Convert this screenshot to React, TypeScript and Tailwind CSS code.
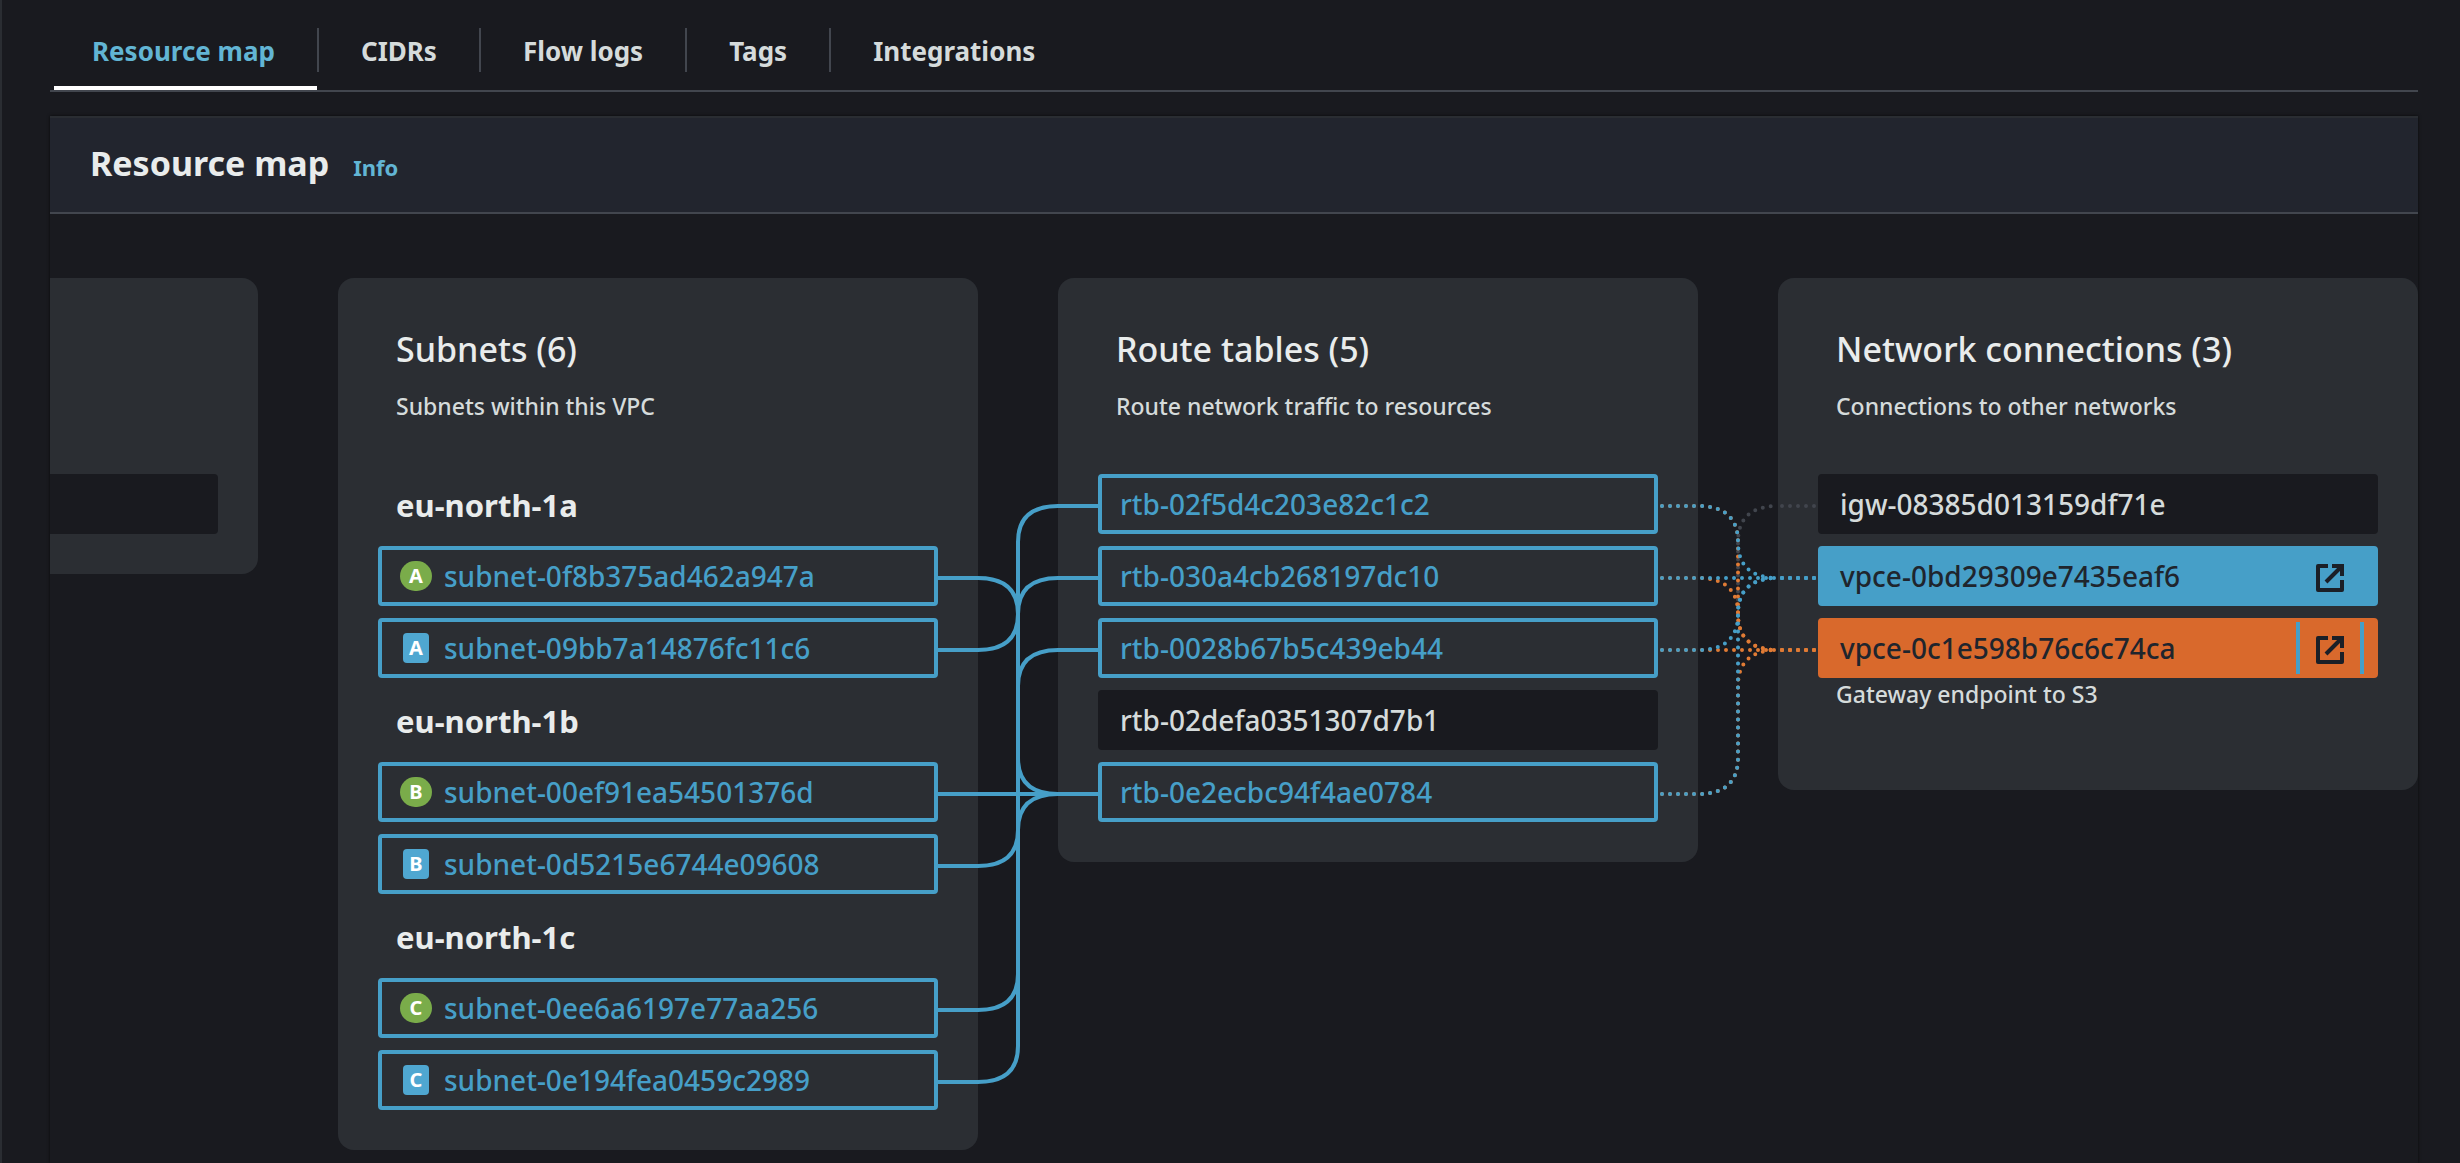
import React from "react";

const BLUE = "#469fc8";
const ORANGE = "#e07b35";
const GREY = "#41454d";

const TABS = ["Resource map", "CIDRs", "Flow logs", "Tags", "Integrations"];

type Subnet = { id: string; letter: string; isPublic: boolean };

const ZONES: { name: string; subnets: Subnet[] }[] = [
  {
    name: "eu-north-1a",
    subnets: [
      { id: "subnet-0f8b375ad462a947a", letter: "A", isPublic: true },
      { id: "subnet-09bb7a14876fc11c6", letter: "A", isPublic: false },
    ],
  },
  {
    name: "eu-north-1b",
    subnets: [
      { id: "subnet-00ef91ea54501376d", letter: "B", isPublic: true },
      { id: "subnet-0d5215e6744e09608", letter: "B", isPublic: false },
    ],
  },
  {
    name: "eu-north-1c",
    subnets: [
      { id: "subnet-0ee6a6197e77aa256", letter: "C", isPublic: true },
      { id: "subnet-0e194fea0459c2989", letter: "C", isPublic: false },
    ],
  },
];

const ROUTE_TABLES = [
  { id: "rtb-02f5d4c203e82c1c2", active: true },
  { id: "rtb-030a4cb268197dc10", active: true },
  { id: "rtb-0028b67b5c439eb44", active: true },
  { id: "rtb-02defa0351307d7b1", active: false },
  { id: "rtb-0e2ecbc94f4ae0784", active: true },
];

/* Row slots are 72px apart; slot 0 is the first row below a card's heading. */
const slotY = (slot: number) => 228 + slot * 72;

/* The middle part of a connector: a curve into the gutter's centre line and out again. */
function curve(from: number, to: number) {
  const a = slotY(from);
  const b = slotY(to);
  if (a === b) return `M40 ${a}H120`;
  const s = b > a ? 36 : -36;
  return `M40 ${a}Q80 ${a} 80 ${a + s}V${b - s}Q80 ${b} 120 ${b}`;
}

function SolidLinks({ links }: { links: [number, number][] }) {
  return (
    <svg className="relative z-10 -mx-10 h-[872px] w-40 shrink-0" viewBox="0 0 160 872" fill="none" stroke={BLUE} strokeWidth="4" aria-hidden="true">
      {links.map(([a, b]) => (
        <path key={`${a}-${b}`} d={`M0 ${slotY(a)}H40${curve(a, b)}M120 ${slotY(b)}H160`} />
      ))}
    </svg>
  );
}

function DottedLinks({ links }: { links: [number, number, string][] }) {
  return (
    <svg
      className="relative z-10 -mx-10 h-[872px] w-40 shrink-0"
      viewBox="0 0 160 872"
      fill="none"
      strokeWidth="4"
      strokeLinecap="round"
      strokeDasharray="0 8"
      strokeDashoffset="-4"
      aria-hidden="true"
    >
      {links.map(([a, b, color]) => (
        <g key={`${a}-${b}`} stroke={color}>
          <path d={`M0 ${slotY(a)}H40`} />
          <path d={curve(a, b)} />
          <path d={`M120 ${slotY(b)}H160`} />
        </g>
      ))}
    </svg>
  );
}

function Card({ title, description, children }: { title: string; description: string; children: React.ReactNode }) {
  return (
    <section className="min-w-0 flex-[640_1_640px] rounded-2xl bg-[#2b2e33] px-10 pt-12 pb-10">
      <h3 className="px-[18px] text-[34px] leading-[46px] font-medium text-[#e9ecec]">{title}</h3>
      <p className="mt-[18px] px-[18px] text-[23px] leading-8 font-medium text-[#d5dbdb]">{description}</p>
      <div className="mt-[52px] flex flex-col gap-3">{children}</div>
    </section>
  );
}

function Badge({ letter, isPublic }: { letter: string; isPublic: boolean }) {
  return (
    <span className="flex w-8 justify-center">
      <span
        className={
          isPublic
            ? "flex h-[30px] w-8 items-center justify-center rounded-full bg-[#7aac4a] text-xl leading-none font-bold text-white"
            : "flex h-[30px] w-[26px] items-center justify-center rounded bg-[#4fa7d1] text-xl leading-none font-bold text-white"
        }
      >
        {letter}
      </span>
    </span>
  );
}

function ExternalIcon() {
  return (
    <svg className="size-7" viewBox="0 0 28 28" fill="none" stroke="#1b1f27" strokeWidth="4" aria-hidden="true">
      <path d="M12 2H2V26H26V16" strokeLinejoin="round" />
      <path d="M16 2H26V12M26 2L10 18" />
    </svg>
  );
}

export default function App() {
  return (
    <main className="flex min-h-screen flex-col border-l-2 border-[#2a2d32] bg-[#191a1f] pr-[42px] pl-12 font-['Noto_Sans',sans-serif] text-[#d5dbdb]">
      <nav className="flex items-start border-b-2 border-[#42464e] pt-7" role="tablist">
        {TABS.map((tab, i) => (
          <React.Fragment key={tab}>
            {i > 0 && <span className="h-11 w-0.5 bg-[#42464e]" />}
            <button
              type="button"
              role="tab"
              aria-selected={i === 0}
              className={
                i === 0
                  ? "ml-1 flex h-[62px] items-start border-b-4 border-white pr-[42px] pl-[38px] text-[26px] leading-[46px] font-bold text-[#62b5d4]"
                  : "ml-1 flex h-[62px] items-start border-b-4 border-transparent pr-[42px] pl-[38px] text-[26px] leading-[46px] font-bold text-[#d5dbdb]"
              }
            >
              {tab}
            </button>
          </React.Fragment>
        ))}
      </nav>

      <section className="mt-6 flex-1 shadow-[0_0_3px_rgba(0,0,0,0.7)]">
        <header className="flex items-baseline gap-6 border-t-2 border-b-2 border-t-[#2a2d32] border-b-[#42464e] bg-[#22252e] px-10 pt-6 pb-7">
          <h2 className="text-[34px] leading-[42px] font-bold text-[#e9ecec]">Resource map</h2>
          <a href="#info" className="text-[22px] leading-8 font-bold text-[#62b5d4]">
            Info
          </a>
        </header>

        <div className="flex items-start pt-16">
          <section className="min-w-0 flex-[208_1_208px] rounded-r-2xl bg-[#2b2e33] pt-[196px] pr-10 pb-10">
            <div className="h-15 rounded-r bg-[#191a1f]" />
          </section>
          <div className="w-20 shrink-0" />

          <Card title="Subnets (6)" description="Subnets within this VPC">
            {ZONES.map((zone) => (
              <React.Fragment key={zone.name}>
                <h4 className="h-15 px-[18px] text-[31px] leading-[62px] font-bold text-[#e9ecec]">{zone.name}</h4>
                {zone.subnets.map((s) => (
                  <button
                    key={s.id}
                    type="button"
                    className="flex h-15 items-center gap-3 rounded border-4 border-[#469fc8] px-[18px] text-[28px] font-medium text-[#469fc8]"
                  >
                    <Badge letter={s.letter} isPublic={s.isPublic} />
                    {s.id}
                  </button>
                ))}
              </React.Fragment>
            ))}
          </Card>

          <SolidLinks
            links={[
              [1, 4],
              [2, 0],
              [4, 4],
              [5, 1],
              [7, 2],
              [8, 4],
            ]}
          />

          <Card title="Route tables (5)" description="Route network traffic to resources">
            {ROUTE_TABLES.map((r) => (
              <button
                key={r.id}
                type="button"
                className={
                  r.active
                    ? "flex h-15 items-center rounded border-4 border-[#469fc8] px-[18px] text-[28px] font-medium text-[#469fc8]"
                    : "flex h-15 items-center rounded border-4 border-[#191a1f] bg-[#191a1f] px-[18px] text-[28px] font-medium text-[#d5dbdb]"
                }
              >
                {r.id}
              </button>
            ))}
          </Card>

          <DottedLinks
            links={[
              [4, 0, GREY],
              [0, 2, ORANGE],
              [1, 2, ORANGE],
              [2, 2, ORANGE],
              [4, 2, ORANGE],
              [0, 1, BLUE],
              [1, 1, BLUE],
              [2, 1, BLUE],
              [4, 1, BLUE],
            ]}
          />

          <Card title="Network connections (3)" description="Connections to other networks">
            <button
              type="button"
              className="flex h-15 items-center rounded border-4 border-[#191a1f] bg-[#191a1f] px-[18px] text-[28px] font-medium text-[#d5dbdb]"
            >
              igw-08385d013159df71e
            </button>
            <div className="flex h-15 items-center justify-between rounded border-4 border-[#469fc8] bg-[#469fc8] pr-2.5 pl-[18px]">
              <button type="button" className="text-[28px] font-medium text-[#1f252d]">
                vpce-0bd29309e7435eaf6
              </button>
              <a
                href="#vpce-0bd29309e7435eaf6"
                aria-label="Open vpce-0bd29309e7435eaf6"
                className="flex h-[52px] w-[68px] items-center justify-center pt-1"
              >
                <ExternalIcon />
              </a>
            </div>
            <div>
              <div className="flex h-15 items-center justify-between rounded border-4 border-[#d9692c] bg-[#d9692c] pr-2.5 pl-[18px]">
                <button type="button" className="text-[28px] font-medium text-[#1f252d]">
                  vpce-0c1e598b76c6c74ca
                </button>
                <a
                  href="#vpce-0c1e598b76c6c74ca"
                  aria-label="Open vpce-0c1e598b76c6c74ca"
                  className="flex h-[52px] w-[68px] items-center justify-center border-x-4 border-[#469fc8] pt-1"
                >
                  <ExternalIcon />
                </a>
              </div>
              <p className="mb-10 px-[18px] text-[23px] leading-8 font-medium text-[#d5dbdb]">Gateway endpoint to S3</p>
            </div>
          </Card>
        </div>
      </section>
    </main>
  );
}
